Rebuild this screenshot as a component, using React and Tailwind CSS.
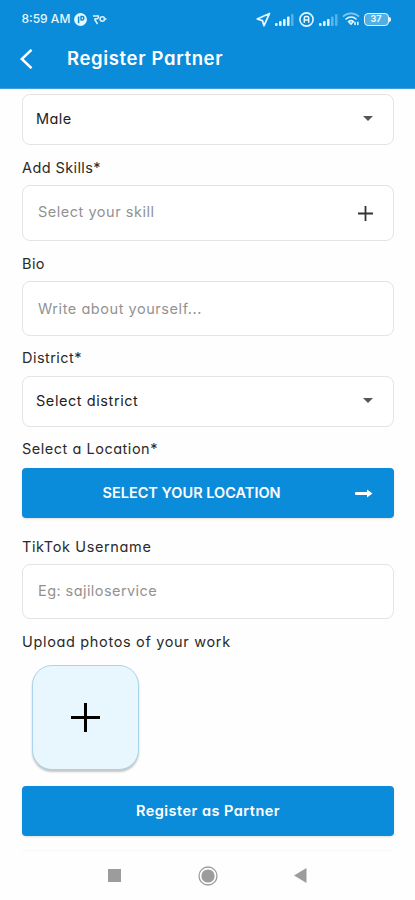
import React from "react";

function Label({ children, className = "" }) {
  return (
    <div className={`flex items-center whitespace-nowrap text-[14.5px] text-[#2a2a2a] ${className}`}>
      {children}
    </div>
  );
}

function Field({ children, className = "" }) {
  return (
    <div className={`flex items-center justify-between whitespace-nowrap rounded-lg border border-[#e4e4e4] bg-white pr-[20px] text-[14.5px] ${className}`}>
      {children}
    </div>
  );
}

function Caret() {
  return (
    <svg className="mb-px h-[5px] w-[10px]" viewBox="0 0 10 5" fill="#555">
      <path d="M0 0h10L5 5z" />
    </svg>
  );
}

function Signal({ lit }) {
  return (
    <svg className="h-3 w-[19px]" viewBox="0 0 19 12" fill="#e2f3fc">
      <rect x="0" y="9" width="2.6" height="3" rx="1" />
      <rect x="4" y="7" width="2.6" height="5" rx="1" />
      <rect x="8" y="5" width="2.6" height="7" rx="1" />
      <rect x="12" y="2.5" width="2.6" height="9.5" rx="1" opacity={lit > 3 ? 1 : 0.4} />
      <rect x="16" y="0" width="2.6" height="12" rx="1" opacity="0.35" />
    </svg>
  );
}

function StatusBar() {
  return (
    <div className="flex h-[38px] items-center pl-[21.5px] text-[#e8f6fd]">
      <span className="w-[52px] whitespace-nowrap text-[12px] font-medium">8:59 AM</span>
      <svg className="h-[13px] w-[13px]" viewBox="0 0 13 13">
        <circle cx="6.5" cy="6.5" r="6.4" fill="#e8f6fd" />
        <path d="M4.6 10.3V3.4M7 7.6V3.6h1.2a1.6 1.6 0 0 1 0 3.4H7" fill="none" stroke="#0b8cda" strokeWidth="1.5" />
      </svg>
      <svg className="ml-[6px] h-[11px] w-[14px]" viewBox="0 0 14 11" fill="none" stroke="#d6eefb" strokeWidth="1.6">
        <path d="M0 2h6M1.5 4.8h2.8a1.8 1.8 0 0 0 0-3.4M1.5 5l3 5" />
        <circle cx="9.3" cy="5" r="2.2" />
        <path d="M11 5h2.5" />
      </svg>
      <svg className="ml-[149.5px] h-[15px] w-[15px]" viewBox="0 0 15 15" fill="none" stroke="#e8f6fd" strokeWidth="1.8" strokeLinejoin="round">
        <path d="M13.5 1.5 1.2 7l5.2 1.6L8 13.7z" />
      </svg>
      <div className="ml-[4px] mt-px flex"><Signal lit={4} /></div>
      <svg className="ml-[4.5px] h-[15px] w-[15px]" viewBox="0 0 15 15" fill="none" stroke="#e8f6fd">
        <circle cx="7.5" cy="7.5" r="6.6" strokeWidth="1.6" />
        <path d="M5.3 10.7V6a1.5 1.5 0 0 1 1.5-1.5h1.4A1.5 1.5 0 0 1 9.7 6v4.7M5.3 8h4.4" strokeWidth="1.5" />
      </svg>
      <div className="ml-[5px] mt-px flex"><Signal lit={3} /></div>
      <svg className="ml-[4px] h-[14px] w-[18px]" viewBox="0 0 18 14" fill="none" stroke="#e8f6fd" strokeWidth="1.6" strokeLinecap="round">
        <path d="M1.5 4.2c4-3.8 11-3.8 15 0" opacity=".55" />
        <path d="M4 7c3-2.6 7.5-2.6 10 0" />
        <path d="M6.6 9.6c1.6-1.3 3.4-1.3 4.8 0L9 12zM13 10.6v1.8M15.8 10.4v2" />
      </svg>
      <div className="ml-[4px] flex items-center">
        <div className="flex h-[13px] w-[25px] items-center justify-center rounded-[4px] border-[1.5px] border-[#e8f6fd] bg-[#51afe5] text-[9px] font-bold">
          37
        </div>
        <div className="h-[5px] w-[2px] rounded-r bg-[#e8f6fd]" />
      </div>
    </div>
  );
}

export default function App() {
  return (
    <div className="flex h-[900px] w-[415px] flex-col overflow-hidden bg-[#fefefe] font-['Inter','Liberation_Sans',sans-serif] [font-feature-settings:'cv11']">
      <header className="h-[89px] shrink-0 border-b border-[#3b9fdf] bg-[#0b8cda] text-white">
        <StatusBar />
        <div className="flex h-[42px] items-center pl-[19.5px]">
          <svg className="h-[20px] w-[13px]" viewBox="0 0 13 20" fill="none" stroke="#fff" strokeWidth="2.5">
            <path d="M11.5 .8 1.8 10l9.7 9.2" />
          </svg>
          <h1 className="ml-[34.5px] whitespace-nowrap text-[18.5px] font-semibold tracking-[0.65px]">Register Partner</h1>
        </div>
      </header>

      <main className="flex flex-col pl-[22px] pr-[21px]">
        <Field className="mt-[5px] h-[51px] pb-px pl-[13px] text-[#222]">
          <span className="tracking-[0.4px]">Male</span>
          <Caret />
        </Field>
        <Label className="h-[40px] pt-[5px] tracking-[0.4px]">Add Skills*</Label>
        <Field className="h-[56px] pl-[15px] text-[#929292]">
          <span className="pb-[2px] tracking-[0.52px]">Select your skill</span>
          <svg className="h-[15px] w-[15px]" viewBox="0 0 15 15" stroke="#333" strokeWidth="1.8">
            <path d="M7.5 0v15M0 7.5h15" />
          </svg>
        </Field>
        <Label className="h-[40px] pt-[5px] tracking-[0.4px]">Bio</Label>
        <Field className="h-[55px] pl-[15px] text-[#929292]">
          <span className="tracking-[0.55px]">Write about yourself...</span>
        </Field>
        <Label className="h-[40px] pt-[4px] tracking-[0.45px]">District*</Label>
        <Field className="h-[51px] pb-px pl-[13px] text-[#222]">
          <span className="tracking-[0.57px]">Select district</span>
          <Caret />
        </Field>
        <Label className="h-[41px] pt-[3px] tracking-[0.52px]">Select a Location*</Label>
        <button className="flex h-[50px] items-center justify-between rounded bg-[#0b8cda] pl-[80.5px] pr-[21px] text-[14.5px] font-semibold text-white shadow-sm">
          <span className="whitespace-nowrap">SELECT YOUR LOCATION</span>
          <svg className="h-[9px] w-[18px]" viewBox="0 0 18 9" fill="#fff">
            <path d="M1 3.1h11V0.6L17.5 4.5 12 8.4V5.9H1a1.4 1.4 0 0 1 0-2.8z" />
          </svg>
        </button>
        <Label className="h-[46px] pt-[11px] tracking-[0.62px]">TikTok Username</Label>
        <Field className="h-[55px] pl-[15px] text-[#929292]">
          <span className="pb-px tracking-[0.43px]">Eg: sajiloservice</span>
        </Field>
        <Label className="h-[46px] pb-px tracking-[0.66px]">Upload photos of your work</Label>
        <button className="ml-[10px] flex h-[105px] w-[107px] items-center justify-center rounded-[20px] border border-[#a9d5ec] bg-[#e8f6fe] shadow-[0_2px_2px_rgba(0,0,0,0.22)]">
          <svg className="h-[29px] w-[29px]" viewBox="0 0 29 29" stroke="#000">
            <path d="M14.5 0v29M0 14.5h29" strokeWidth="3" />
          </svg>
        </button>
        <button className="mt-[16px] h-[50px] whitespace-nowrap rounded bg-[#0b8cda] text-center text-[14.5px] font-semibold tracking-[0.48px] text-white shadow">
          <span>Register as Partner</span>
        </button>
      </main>

      <nav className="mx-[22px] mt-[14px] flex h-[50px] items-center border-t border-[#f8f8f8] pl-[85.5px]">
        <div className="h-[13px] w-[13px] bg-[#9c9c9c]" />
        <svg className="ml-[77.5px] h-[20px] w-[20px]" viewBox="0 0 20 20">
          <circle cx="10" cy="10" r="9" fill="none" stroke="#9c9c9c" strokeWidth="1.3" />
          <circle cx="10" cy="10" r="6.6" fill="#9c9c9c" />
        </svg>
        <svg className="ml-[76px] h-[15px] w-[13px]" viewBox="0 0 13 15" fill="#9c9c9c">
          <path d="M12.5 0v15L0 7.5z" />
        </svg>
      </nav>
    </div>
  );
}
